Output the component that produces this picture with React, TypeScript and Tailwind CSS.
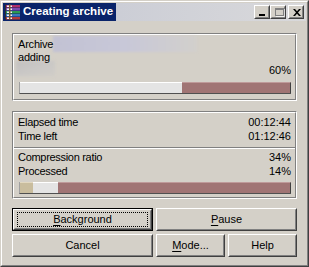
import React from "react";

const font = { fontFamily: '"Liberation Sans", Arial, sans-serif' };

function RaisedBtn({
  children,
  isDefault = false,
  className = "",
}: {
  children: React.ReactNode;
  isDefault?: boolean;
  className?: string;
}) {
  const inner = (
    <div className="h-full w-full border border-t-white border-l-white border-r-[#404040] border-b-[#404040]">
      <div className="h-full w-full border border-t-[#d4d0c8] border-l-[#d4d0c8] border-r-[#808080] border-b-[#808080] flex items-center justify-center text-[11px] text-black">
        {isDefault ? (
          <div className="w-[131px] h-[15px] border border-dotted border-black flex items-center justify-center">
            {children}
          </div>
        ) : (
          children
        )}
      </div>
    </div>
  );
  if (isDefault) {
    return <div className={`h-[23px] border border-black ${className}`}>{inner}</div>;
  }
  return <div className={`h-[23px] ${className}`}>{inner}</div>;
}

function TitleBtn({ children }: { children: React.ReactNode }) {
  return (
    <div className="w-[16px] h-[14px] bg-[#d4d0c8] border border-t-white border-l-white border-r-[#404040] border-b-[#404040]">
      <div className="w-full h-full border border-t-[#d4d0c8] border-l-[#d4d0c8] border-r-[#808080] border-b-[#808080] relative">
        {children}
      </div>
    </div>
  );
}

function GroupBox({
  children,
  className = "",
}: {
  children: React.ReactNode;
  className?: string;
}) {
  return (
    <div
      className={`border border-t-[#808080] border-l-[#808080] border-r-white border-b-white ${className}`}
    >
      <div className="h-full w-full border border-t-white border-l-white border-r-[#808080] border-b-[#808080] relative">
        {children}
      </div>
    </div>
  );
}

function Bar({ done, beige = 0 }: { done: number; beige?: number }) {
  return (
    <div className="ml-[5px] mr-[4px] h-[12px] flex border-b border-b-[#505050] border-l border-l-[#a0a0a0]">
      {beige > 0 && (
        <div
          className="h-full bg-[#c9bd9e] border-t border-t-[#e2d8c0]"
          style={{ width: beige }}
        />
      )}
      <div
        className="h-full bg-[#e4e4e4] border-t border-t-white"
        style={{ width: done - beige }}
      />
      <div className="h-full flex-1 bg-[#a07474] border-t border-t-[#bf9a9a] border-r border-r-[#404040]" />
    </div>
  );
}

function RarIcon() {
  const colors = ["#b0306a", "#7a4cb0", "#2e9a52", "#3a78c0", "#b03a3a"];
  return (
    <svg width="16" height="16" viewBox="0 0 16 16">
      {colors.map((c, i) => (
        <g key={i}>
          <rect x="1" y={1 + i * 3} width="14" height="2.5" fill={c} />
          <rect x="2" y={1.5 + i * 3} width="5" height="1.5" fill="#f4f4f4" />
        </g>
      ))}
      <rect x="4" y="0.5" width="1.5" height="15" fill="#7a5a2a" />
      <rect x="0" y="0.5" width="1" height="15" fill="#303030" />
    </svg>
  );
}

export default function App() {
  return (
    <div style={font} className="w-[309px] h-[267px] bg-[#d4d0c8] text-black">
      <div className="w-full h-full border border-t-[#d4d0c8] border-l-[#d4d0c8] border-r-[#404040] border-b-[#404040]">
        <div className="w-full h-full border border-t-white border-l-white border-r-[#808080] border-b-[#808080] p-px flex flex-col">
          {/* Title bar */}
          <div className="h-[18px] flex items-center bg-gradient-to-r from-[#c4c7d3] to-[#d9d9db]">
            <div className="h-full w-[113px] bg-[#0a246a] flex items-center">
              <div className="ml-[2px] w-[16px] h-[16px]">
                <RarIcon />
              </div>
              <span className="ml-[2px] text-white font-bold text-[11.5px] leading-none whitespace-nowrap">
                Creating archive
              </span>
            </div>
            <div className="flex-1" />
            <div className="flex items-center pr-[2px]">
              <TitleBtn>
                <div className="absolute left-[3px] top-[7px] w-[6px] h-[2px] bg-black" />
              </TitleBtn>
              <TitleBtn>
                <div className="absolute left-[3px] top-[1px] w-[9px] h-[8px] border border-[#808080] border-t-2" />
                <div className="absolute left-[4px] top-[2px] w-[9px] h-[8px] border border-white border-t-0 border-l-0 opacity-70" />
              </TitleBtn>
              <div className="w-[2px]" />
              <TitleBtn>
                <svg
                  className="absolute left-[3px] top-[2px]"
                  width="8"
                  height="7"
                  viewBox="0 0 8 7"
                >
                  <path d="M0 0h2l2 2.3 2-2.3h2L5 3.5 8 7H6L4 4.7 2 7H0l3-3.5z" fill="#000" />
                </svg>
              </TitleBtn>
            </div>
          </div>

          {/* Body */}
          <div className="px-[9px] flex flex-col">
            <GroupBox className="mt-[12px] h-[68px]">
              <div className="absolute left-[39px] top-[1px] w-[144px] h-[16px] blur-[1px] bg-gradient-to-r from-[#c2c2d4] via-[#c8c8d8] to-[#d2d0cc]" />
              <div className="absolute left-[2px] top-[26px] w-[39px] h-[15px] blur-[1.5px] bg-gradient-to-br from-[#c2c0c0] via-[#cac8c6] to-[#d0cdc8]" />
              <div className="relative pt-[3px]">
                <div className="h-[13px] leading-[13px] text-[11px] pl-[4px] tracking-[-0.2px]">Archive</div>
                <div className="h-[13px] leading-[13px] text-[11px] pl-[4px] tracking-[-0.2px]">adding</div>
                <div className="h-[13px] leading-[13px] text-[11px] pr-[4px] text-right">60%</div>
                <div className="mt-[5px]">
                  <Bar done={162} />
                </div>
              </div>
            </GroupBox>

            <GroupBox className="mt-[10px] h-[88px]">
              <div className="pt-[2px]">
                <div className="h-[14px] leading-[14px] text-[11px] px-[4px] flex justify-between">
                  <span className="tracking-[-0.3px]">Elapsed time</span>
                  <span>00:12:44</span>
                </div>
                <div className="h-[14px] leading-[14px] text-[11px] px-[4px] flex justify-between">
                  <span className="tracking-[-0.3px]">Time left</span>
                  <span>01:12:46</span>
                </div>
              </div>
              <div className="mt-[4px] h-px bg-[#808080]" />
              <div className="h-px bg-white" />
              <div className="pt-[1px]">
                <div className="h-[14px] leading-[14px] text-[11px] px-[4px] flex justify-between">
                  <span className="tracking-[-0.3px]">Compression ratio</span>
                  <span>34%</span>
                </div>
                <div className="h-[14px] leading-[14px] text-[11px] px-[4px] flex justify-between">
                  <span className="tracking-[-0.3px]">Processed</span>
                  <span>14%</span>
                </div>
                <div className="mt-[4px]">
                  <Bar done={38} beige={13} />
                </div>
              </div>
            </GroupBox>

            <div className="mt-[9px] grid grid-cols-2 gap-x-[3px]">
              <RaisedBtn isDefault>
                <span>
                  <span className="underline underline-offset-[2px]">B</span>ackground
                </span>
              </RaisedBtn>
              <RaisedBtn>
                <span>
                  <span className="underline underline-offset-[2px]">P</span>ause
                </span>
              </RaisedBtn>
            </div>
            <div className="mt-[3px] grid grid-cols-2 gap-x-[3px]">
              <RaisedBtn>Cancel</RaisedBtn>
              <div className="grid grid-cols-2 gap-x-[3px]">
                <RaisedBtn>
                  <span>
                    <span className="underline underline-offset-[2px]">M</span>ode...
                  </span>
                </RaisedBtn>
                <RaisedBtn>Help</RaisedBtn>
              </div>
            </div>
          </div>
        </div>
      </div>
    </div>
  );
}
